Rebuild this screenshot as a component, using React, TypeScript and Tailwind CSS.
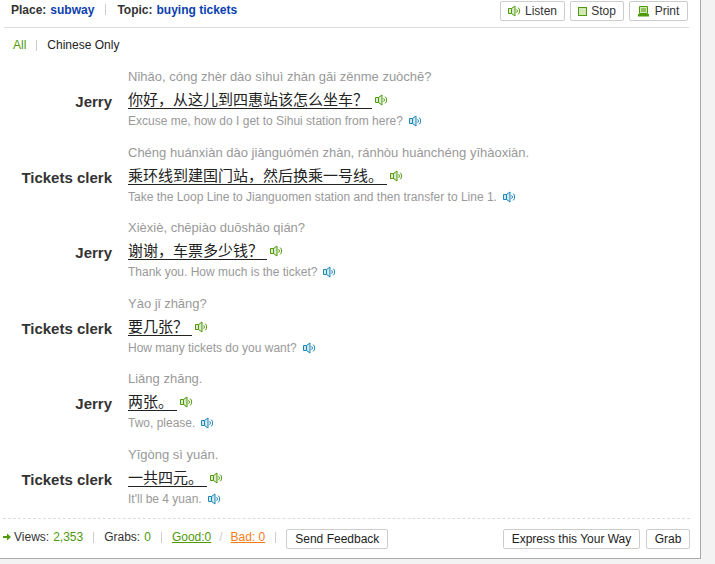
import React from 'react';

type Line = {
  speaker: string;
  pinyin: string;
  chinese: string;
  english: string;
};

const lines: Line[] = [
  {
    speaker: 'Jerry',
    pinyin: 'Nǐhǎo, cóng zhèr dào sìhuì zhàn gāi zěnme zuòchē?',
    chinese: '你好，从这儿到四惠站该怎么坐车？',
    english: 'Excuse me, how do I get to Sihui station from here?',
  },
  {
    speaker: 'Tickets clerk',
    pinyin: 'Chéng huánxiàn dào jiànguómén zhàn, ránhòu huànchéng yīhàoxiàn.',
    chinese: '乘环线到建国门站，然后换乘一号线。',
    english: 'Take the Loop Line to Jianguomen station and then transfer to Line 1.',
  },
  {
    speaker: 'Jerry',
    pinyin: 'Xièxiè, chēpiào duōshǎo qián?',
    chinese: '谢谢，车票多少钱？',
    english: 'Thank you. How much is the ticket?',
  },
  {
    speaker: 'Tickets clerk',
    pinyin: 'Yào jǐ zhāng?',
    chinese: '要几张？',
    english: 'How many tickets do you want?',
  },
  {
    speaker: 'Jerry',
    pinyin: 'Liǎng zhāng.',
    chinese: '两张。',
    english: 'Two, please.',
  },
  {
    speaker: 'Tickets clerk',
    pinyin: 'Yīgòng sì yuán.',
    chinese: '一共四元。',
    english: "It'll be 4 yuan.",
  },
];

function Speaker({ color }: { color: string }) {
  return (
    <svg width="13" height="12" viewBox="0 0 13 12" fill="none" className="shrink-0">
      <path d="M0.5 3.5h3L7 1v10L3.5 8.5h-3z" fill={color} fillOpacity="0.2" stroke={color} strokeWidth="1" />
      <path d="M3.5 3.5v5" stroke={color} strokeWidth="1" />
      <path d="M8.6 4.2a2.5 2.5 0 0 1 0 3.6M10.2 2.6a4.6 4.6 0 0 1 0 6.8" stroke={color} strokeWidth="1" />
    </svg>
  );
}

function ToolButton({ icon, label, width }: { icon: React.ReactNode; label: string; width: string }) {
  return (
    <button className={`flex h-[20px] items-center justify-center gap-[4px] rounded-[2px] border border-[#ccc] bg-white text-[12px] text-[#333] ${width}`}>
      {icon}
      {label}
    </button>
  );
}

function PlainButton({ label, width }: { label: string; width: string }) {
  return (
    <button className={`flex h-[20px] items-center justify-center rounded-[2px] border border-[#ccc] bg-white text-[12px] text-[#222] ${width}`}>
      {label}
    </button>
  );
}

function Sep() {
  return <span className="mx-[10px] mb-[3px] h-[11px] w-px bg-[#ccc]" />;
}

export default function App() {
  return (
    <div className="h-[564px] w-[715px] overflow-hidden bg-[#f3f3f3] font-['Liberation_Sans','Noto_Sans_CJK_SC',sans-serif]">
      <div className="h-[559px] w-[701px] border-r border-b border-[#aaa] bg-white">
        {/* top bar */}
        <div className="ml-[4px] flex h-[28px] w-[685px] items-start justify-between border-b border-[#ddd] pt-px">
          <div className="flex h-[17px] items-center pl-[7px] text-[12px] font-bold text-[#333]">
            <span>Place:</span>
            <a className="ml-[4px] text-[#0b3fb0]">subway</a>
            <span className="mx-[11px] h-[11px] w-px bg-[#ccc]" />
            <span>Topic:</span>
            <a className="ml-[4px] text-[#0b3fb0]">buying tickets</a>
          </div>
          <div className="flex gap-[5px] pr-[1px]">
            <ToolButton width="w-[65px]" label="Listen" icon={<Speaker color="#4f9a0a" />} />
            <ToolButton
              width="w-[54px]"
              label="Stop"
              icon={<span className="h-[9px] w-[9px] border border-[#4f9a0a] bg-[#d3e9b5]" />}
            />
            <ToolButton
              width="w-[59px]"
              label="Print"
              icon={
                <svg width="11" height="11" viewBox="0 0 11 11" fill="none" className="mr-[2px]">
                  <path d="M1.5 0.5h8v7h-8z" fill="#d3e9b5" stroke="#4f9a0a" />
                  <path d="M3 3h5M3 5h5" stroke="#4f9a0a" />
                  <path d="M0 8h11v2.5H0z" fill="#4f9a0a" />
                </svg>
              }
            />
          </div>
        </div>

        {/* filter */}
        <div className="flex h-[33px] items-center pt-[1px] pl-[13px] text-[12px]">
          <span className="text-[#4f9a0a]">All</span>
          <span className="mx-[10px] h-[11px] w-px bg-[#ccc]" />
          <span className="text-[#222]">Chinese Only</span>
        </div>

        {/* dialogue */}
        <div className="pt-[6px]">
          {lines.map((line, i) => (
            <div key={i} className="flex h-[75.6px]">
              <div className="w-[112px] pt-[22px] text-right text-[15px] leading-[26px] font-bold text-[#333]">
                {line.speaker}
              </div>
              <div className="ml-[16px]">
                <div className="h-[20px] text-[13px] leading-[20px] text-[#999]">{line.pinyin}</div>
                <div className="flex h-[26px] items-center">
                  <span className="border-b border-[#222] pr-[4px] text-[15px] leading-[17px] text-[#222]">
                    {line.chinese}
                  </span>
                  <span className="ml-[3px]">
                    <Speaker color="#4f9a0a" />
                  </span>
                </div>
                <div className="flex h-[16px] items-center text-[12px] text-[#999]">
                  <span>{line.english}</span>
                  <span className="ml-[6px]">
                    <Speaker color="#1b87b5" />
                  </span>
                </div>
              </div>
            </div>
          ))}
        </div>

        {/* footer */}
        <div className="mt-[-3px] ml-[3px] flex h-[40px] w-[687px] items-center justify-between border-t border-dashed border-[#ddd] pt-[1px]">
          <div className="flex items-center text-[12px] text-[#333]">
            <svg width="8" height="8" viewBox="0 0 8 8" className="mr-[3px] mb-[3px]">
              <path d="M0 3h4V0.5L8 4 4 7.5V5H0z" fill="#4f9a0a" />
            </svg>
            <span className="mb-[3px]">Views:</span>
            <span className="mb-[3px] ml-[4px] text-[#4f9a0a]">2,353</span>
            <Sep />
            <span className="mb-[3px]">Grabs:</span>
            <span className="mb-[3px] ml-[4px] text-[#4f9a0a]">0</span>
            <Sep />
            <a className="mb-[3px] text-[#4f9a0a] underline">Good:0</a>
            <span className="mx-[8px] mb-[3px] text-[#ccc]">/</span>
            <a className="mb-[3px] text-[#f57c14] underline">Bad: 0</a>
            <Sep />
            <PlainButton label="Send Feedback" width="w-[102px]" />
          </div>
          <div className="flex gap-[6px]">
            <PlainButton label="Express this Your Way" width="w-[137px]" />
            <PlainButton label="Grab" width="w-[44px]" />
          </div>
        </div>
      </div>
    </div>
  );
}
